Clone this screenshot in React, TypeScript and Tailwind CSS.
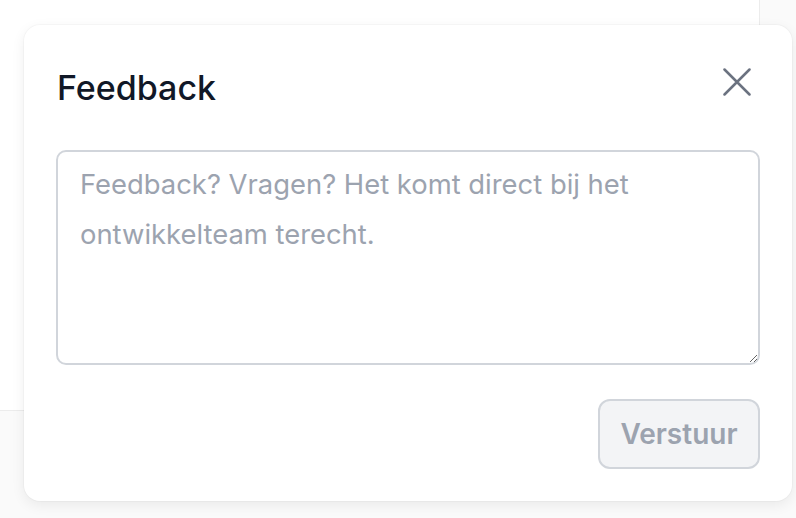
import React from "react";

export default function App() {
  return (
    <div className="relative w-[796px] h-[518px] bg-[#fafafa] overflow-hidden font-['Inter','Noto_Sans',sans-serif]">
      <div className="w-[760px] h-[411px] bg-white border-r border-b border-[#ececec]" />
      <div className="absolute left-[24px] top-[25px] w-[768px] h-[476px] bg-white rounded-2xl shadow-[0_0_0_1px_rgba(0,0,0,0.025),0_4px_14px_rgba(0,0,0,0.07)] pt-[32px] px-[32px] pb-[32px] flex flex-col">
        <div className="flex items-start justify-between">
          <h2 className="mt-[11px] ml-[1px] text-[34px] leading-[40px] font-medium text-[#111827]">
            Feedback
          </h2>
          <button className="mt-[11px] mr-[9px] w-[28px] h-[28px] text-[#6b7280]" aria-label="Sluiten">
            <svg width="28" height="28" viewBox="0 0 28 28" fill="none" stroke="currentColor" strokeWidth="2.5" strokeLinecap="round">
              <path d="M1.5 1.5L26.5 26.5M26.5 1.5L1.5 26.5" />
            </svg>
          </button>
        </div>
        <textarea
          className="mt-[42px] w-[704px] h-[215px] border-2 border-[#d1d5db] rounded-[10px] pt-[7px] px-[22px] text-[27.4px] leading-[50px] text-[#111827] placeholder:text-[#9ca3af] font-['Inter','Noto_Sans',sans-serif] outline-none bg-white"
          placeholder="Feedback? Vragen? Het komt direct bij het ontwikkelteam terecht."
        />
        <div className="mt-[34px] flex justify-end">
          <button
            disabled
            className="w-[162px] h-[70px] rounded-[12px] border-2 border-[#d1d5db] bg-[#f3f4f6] text-[28px] font-semibold text-[#9ca3af] leading-none"
          >
            Verstuur
          </button>
        </div>
      </div>
    </div>
  );
}
